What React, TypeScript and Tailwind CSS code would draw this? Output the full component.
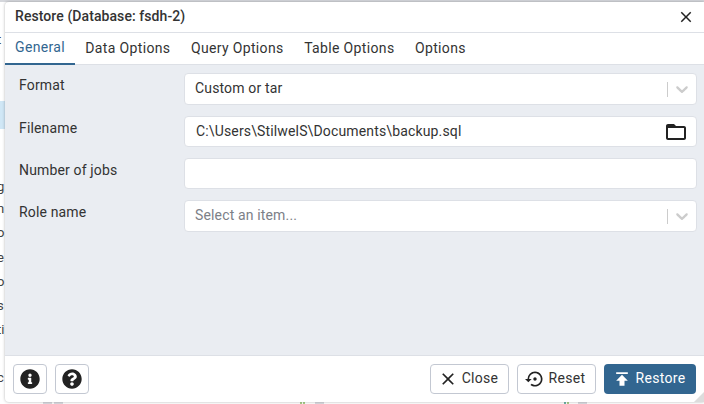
import { FaInfoCircle, FaQuestionCircle } from "react-icons/fa";
import { MdClose, MdFolderOpen, MdPublish, MdSettingsBackupRestore } from "react-icons/md";

const TABS = ["General", "Data Options", "Query Options", "Table Options", "Options"];

// letters of the page behind the dialog, cut off by its left edge
const BEHIND = [
  { text: "t", top: "top-[32px]" },
  { text: "g", top: "top-[179px]" },
  { text: "n", top: "top-[201px]" },
  { text: "o:", top: "top-[225px]" },
  { text: "e", top: "top-[250px]" },
  { text: "o", top: "top-[274px]" },
  { text: "s", top: "top-[298px]" },
  { text: "ti", top: "top-[322px]" },
  { text: "c", top: "top-[370px]" },
];

// bits of the page showing under the dialog's bottom edge
const BOTTOM_BITS = [
  "left-[43px] w-[9px] bg-[#d9dbe0]",
  "left-[54px] w-[9px] bg-[#d9dbe0]",
  "left-[300px] w-[2px] bg-[#a9cf8a]",
  "left-[303px] w-[2px] bg-[#a9cf8a]",
  "left-[315px] w-[9px] bg-[#d9dbe0]",
  "left-[564px] w-[2px] bg-[#6fb3a8]",
  "left-[567px] w-[2px] bg-[#a9cf8a]",
  "left-[578px] w-[9px] bg-[#d9dbe0]",
];

function Chevron() {
  return (
    <svg width="20" height="20" viewBox="0 0 20 20" className="fill-[#cccccc]">
      <path d="M4.516 7.548c0.436-0.446 1.043-0.481 1.576 0l3.908 3.747 3.908-3.747c0.533-0.481 1.141-0.446 1.574 0 0.436 0.445 0.408 1.197 0 1.615-0.406 0.418-4.695 4.502-4.695 4.502-0.217 0.223-0.502 0.335-0.787 0.335s-0.57-0.112-0.789-0.335c0 0-4.287-4.084-4.695-4.502s-0.436-1.17 0-1.615z" />
    </svg>
  );
}

function Field({ label, children }: { label: string; children: React.ReactNode }) {
  return (
    <div className="flex">
      <div className="w-[165px] shrink-0 pt-[2px] text-[14px] leading-[21px] tracking-[0.15px] text-[#333]">{label}</div>
      {children}
    </div>
  );
}

function SelectBox({ value, muted }: { value: string; muted?: boolean }) {
  return (
    <div className={`flex h-[32px] flex-1 items-center rounded border border-[#dde0e6] bg-white pr-[4px] pl-[10px] text-[14px] tracking-[0.15px] ${muted ? "text-[#7c8087]" : "text-[#333]"}`}>
      <span className="flex-1 pb-[2px]">{value}</span>
      <span className="mr-[4px] h-[15px] w-px bg-[#cccccc]" />
      <Chevron />
    </div>
  );
}

function FooterButton({ icon, label }: { icon: React.ReactNode; label: string }) {
  return (
    <button className="flex h-[30px] w-[79px] items-center justify-center gap-[4px] rounded border border-[#c3c8d2] bg-white pr-[3px] pb-[1px] text-[14px] tracking-[0.3px] text-[#333]">
      {icon}
      {label}
    </button>
  );
}

export default function App() {
  return (
    <div className="relative h-[404px] w-[704px] overflow-hidden bg-white font-['Roboto',sans-serif]">
      {BEHIND.map((item) => (
        <span key={item.top} className={`absolute left-[-3px] text-[13px] leading-[16px] text-[#444] ${item.top}`}>
          {item.text}
        </span>
      ))}
      <div className="absolute top-[101px] left-0 h-[28px] w-[5px] bg-[#d0e7f6]" />
      <div className="absolute top-0 left-0 h-[2px] w-full bg-[#d5d7dc]" />
      {BOTTOM_BITS.map((bit) => (
        <div key={bit} className={`absolute bottom-0 h-[2px] ${bit}`} />
      ))}

      <div className="absolute top-[2px] left-[5px] flex h-[400px] w-[699px] flex-col rounded-l bg-white shadow-[0_0_3px_rgba(0,0,0,0.3)]">
        <div className="flex h-[31px] shrink-0 items-center justify-between border-b border-[#dde0e6] pr-[9px] pl-[10px]">
          <span className="pb-[2px] text-[14px] font-medium tracking-[0.08px] text-[#333]">Restore (Database: fsdh-2)</span>
          <MdClose size={18} className="text-[#222]" />
        </div>

        <div className="flex h-[32px] shrink-0 border-b border-[#dde0e6] text-[14px] tracking-[0.35px] text-[#333]">
          {TABS.map((tab, i) => (
            <div
              key={tab}
              className={
                i === 0
                  ? "flex h-[32px] items-center border-b-2 border-[#326690] px-[10px] pb-[1px] text-[#326690]"
                  : "flex h-[31px] items-center px-[10.25px] pb-[1px]"
              }
            >
              {tab}
            </div>
          ))}
        </div>

        <div className="flex flex-1 flex-col gap-[11px] bg-[#eaedf2] pt-[8px] pr-[7px] pb-[8px] pl-[14px]">
          <Field label="Format">
            <SelectBox value="Custom or tar" />
          </Field>
          <Field label="Filename">
            <div className="flex h-[31px] flex-1 items-center rounded border border-[#dde0e6] bg-white pr-[8px] pl-[11px] text-[14px] tracking-[0.15px] text-[#333]">
              <span className="flex-1">C:\Users\StilwelS\Documents\backup.sql</span>
              <MdFolderOpen size={24} className="text-[#222]" />
            </div>
          </Field>
          <Field label="Number of jobs">
            <div className="h-[31px] flex-1 rounded border border-[#dde0e6] bg-white" />
          </Field>
          <Field label="Role name">
            <SelectBox value="Select an item..." muted />
          </Field>
        </div>

        <div className="relative flex h-[47px] shrink-0 items-center gap-[8px] border-t border-[#dde0e6] pr-[8px] pl-[8px]">
          <button className="flex h-[30px] w-[34px] items-center justify-center rounded border border-[#c3c8d2] bg-white text-[#222]">
            <FaInfoCircle size={20} />
          </button>
          <button className="flex h-[30px] w-[34px] items-center justify-center rounded border border-[#c3c8d2] bg-white text-[#222]">
            <FaQuestionCircle size={20} />
          </button>
          <div className="flex-1" />
          <FooterButton icon={<MdClose size={20} className="text-[#222]" />} label="Close" />
          <FooterButton icon={<MdSettingsBackupRestore size={20} className="text-[#222]" />} label="Reset" />
          <button className="flex h-[30px] w-[92px] items-center justify-center gap-[4px] rounded bg-[#326690] pr-[3px] pb-[1px] text-[14px] tracking-[0.3px] text-white">
            <MdPublish size={20} />
            Restore
          </button>
          {/* resize grip */}
          <svg width="10" height="10" viewBox="0 0 10 10" className="absolute right-0 bottom-0 fill-[#dcdcdc]">
            <polygon points="10,0 10,10 0,10" />
          </svg>
        </div>
      </div>
    </div>
  );
}
